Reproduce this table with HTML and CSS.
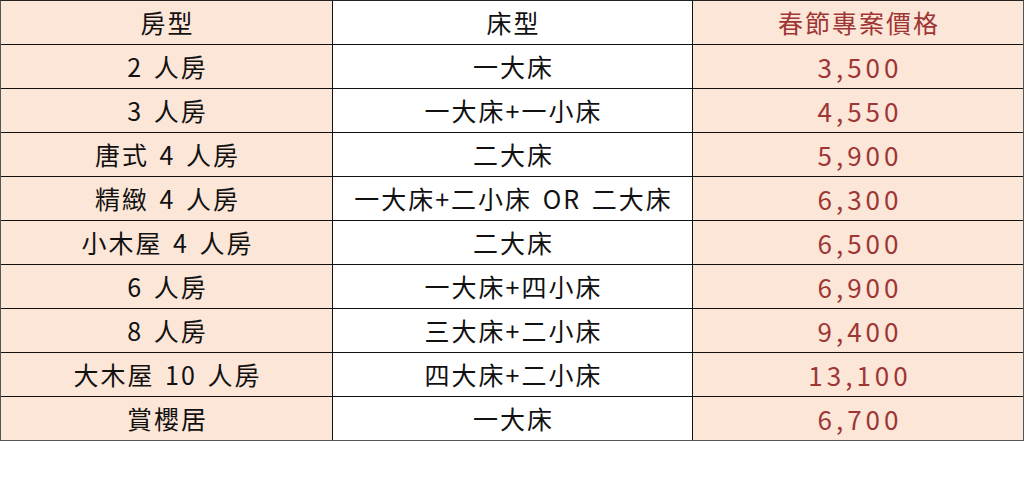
FILE: index.html
```html
<!DOCTYPE html>
<html lang="zh-Hant">
<head>
<meta charset="utf-8">
<title>春節專案價格</title>
<link rel="stylesheet" href="styles.css">
</head>
<body>
<div class="table">
  <div class="cell peach">房型</div>
  <div class="cell white">床型</div>
  <div class="cell peach price">春節專案價格</div>

  <div class="cell peach">2 人房</div>
  <div class="cell white">一大床</div>
  <div class="cell peach price num">3,500</div>

  <div class="cell peach">3 人房</div>
  <div class="cell white">一大床+一小床</div>
  <div class="cell peach price num">4,550</div>

  <div class="cell peach">唐式 4 人房</div>
  <div class="cell white">二大床</div>
  <div class="cell peach price num">5,900</div>

  <div class="cell peach">精緻 4 人房</div>
  <div class="cell white">一大床+二小床 OR 二大床</div>
  <div class="cell peach price num">6,300</div>

  <div class="cell peach">小木屋 4 人房</div>
  <div class="cell white">二大床</div>
  <div class="cell peach price num">6,500</div>

  <div class="cell peach">6 人房</div>
  <div class="cell white">一大床+四小床</div>
  <div class="cell peach price num">6,900</div>

  <div class="cell peach">8 人房</div>
  <div class="cell white">三大床+二小床</div>
  <div class="cell peach price num">9,400</div>

  <div class="cell peach">大木屋 10 人房</div>
  <div class="cell white">四大床+二小床</div>
  <div class="cell peach price num">13,100</div>

  <div class="cell peach">賞櫻居</div>
  <div class="cell white">一大床</div>
  <div class="cell peach price num">6,700</div>
</div>
</body>
</html>
```
FILE: styles.css
```css
html, body {
  margin: 0;
  padding: 0;
  background: #ffffff;
}

body {
  width: 1024px;
  height: 484px;
  overflow: hidden;
}

.table {
  display: grid;
  grid-template-columns: 331px 359px 330px;
  grid-auto-rows: 43px;
  gap: 1px;
  background: #111111;
  border: 1px solid #555555;
  border-top-color: #222222;
  width: 1022px;
}

.cell {
  display: flex;
  align-items: center;
  justify-content: center;
  padding-left: 2px;
  font-family: "Noto Sans CJK TC", "Noto Sans", sans-serif;
  font-size: 25px;
  font-weight: 400;
  color: #111111;
  line-height: 1;
  letter-spacing: 2px;
  word-spacing: 3px;
  white-space: nowrap;
}

.peach {
  background: #fce6d7;
}

.white {
  background: #ffffff;
}

.price {
  color: #9e3636;
}

.num {
  letter-spacing: 4px;
  font-size: 26px;
  padding-left: 4px;
}
```
